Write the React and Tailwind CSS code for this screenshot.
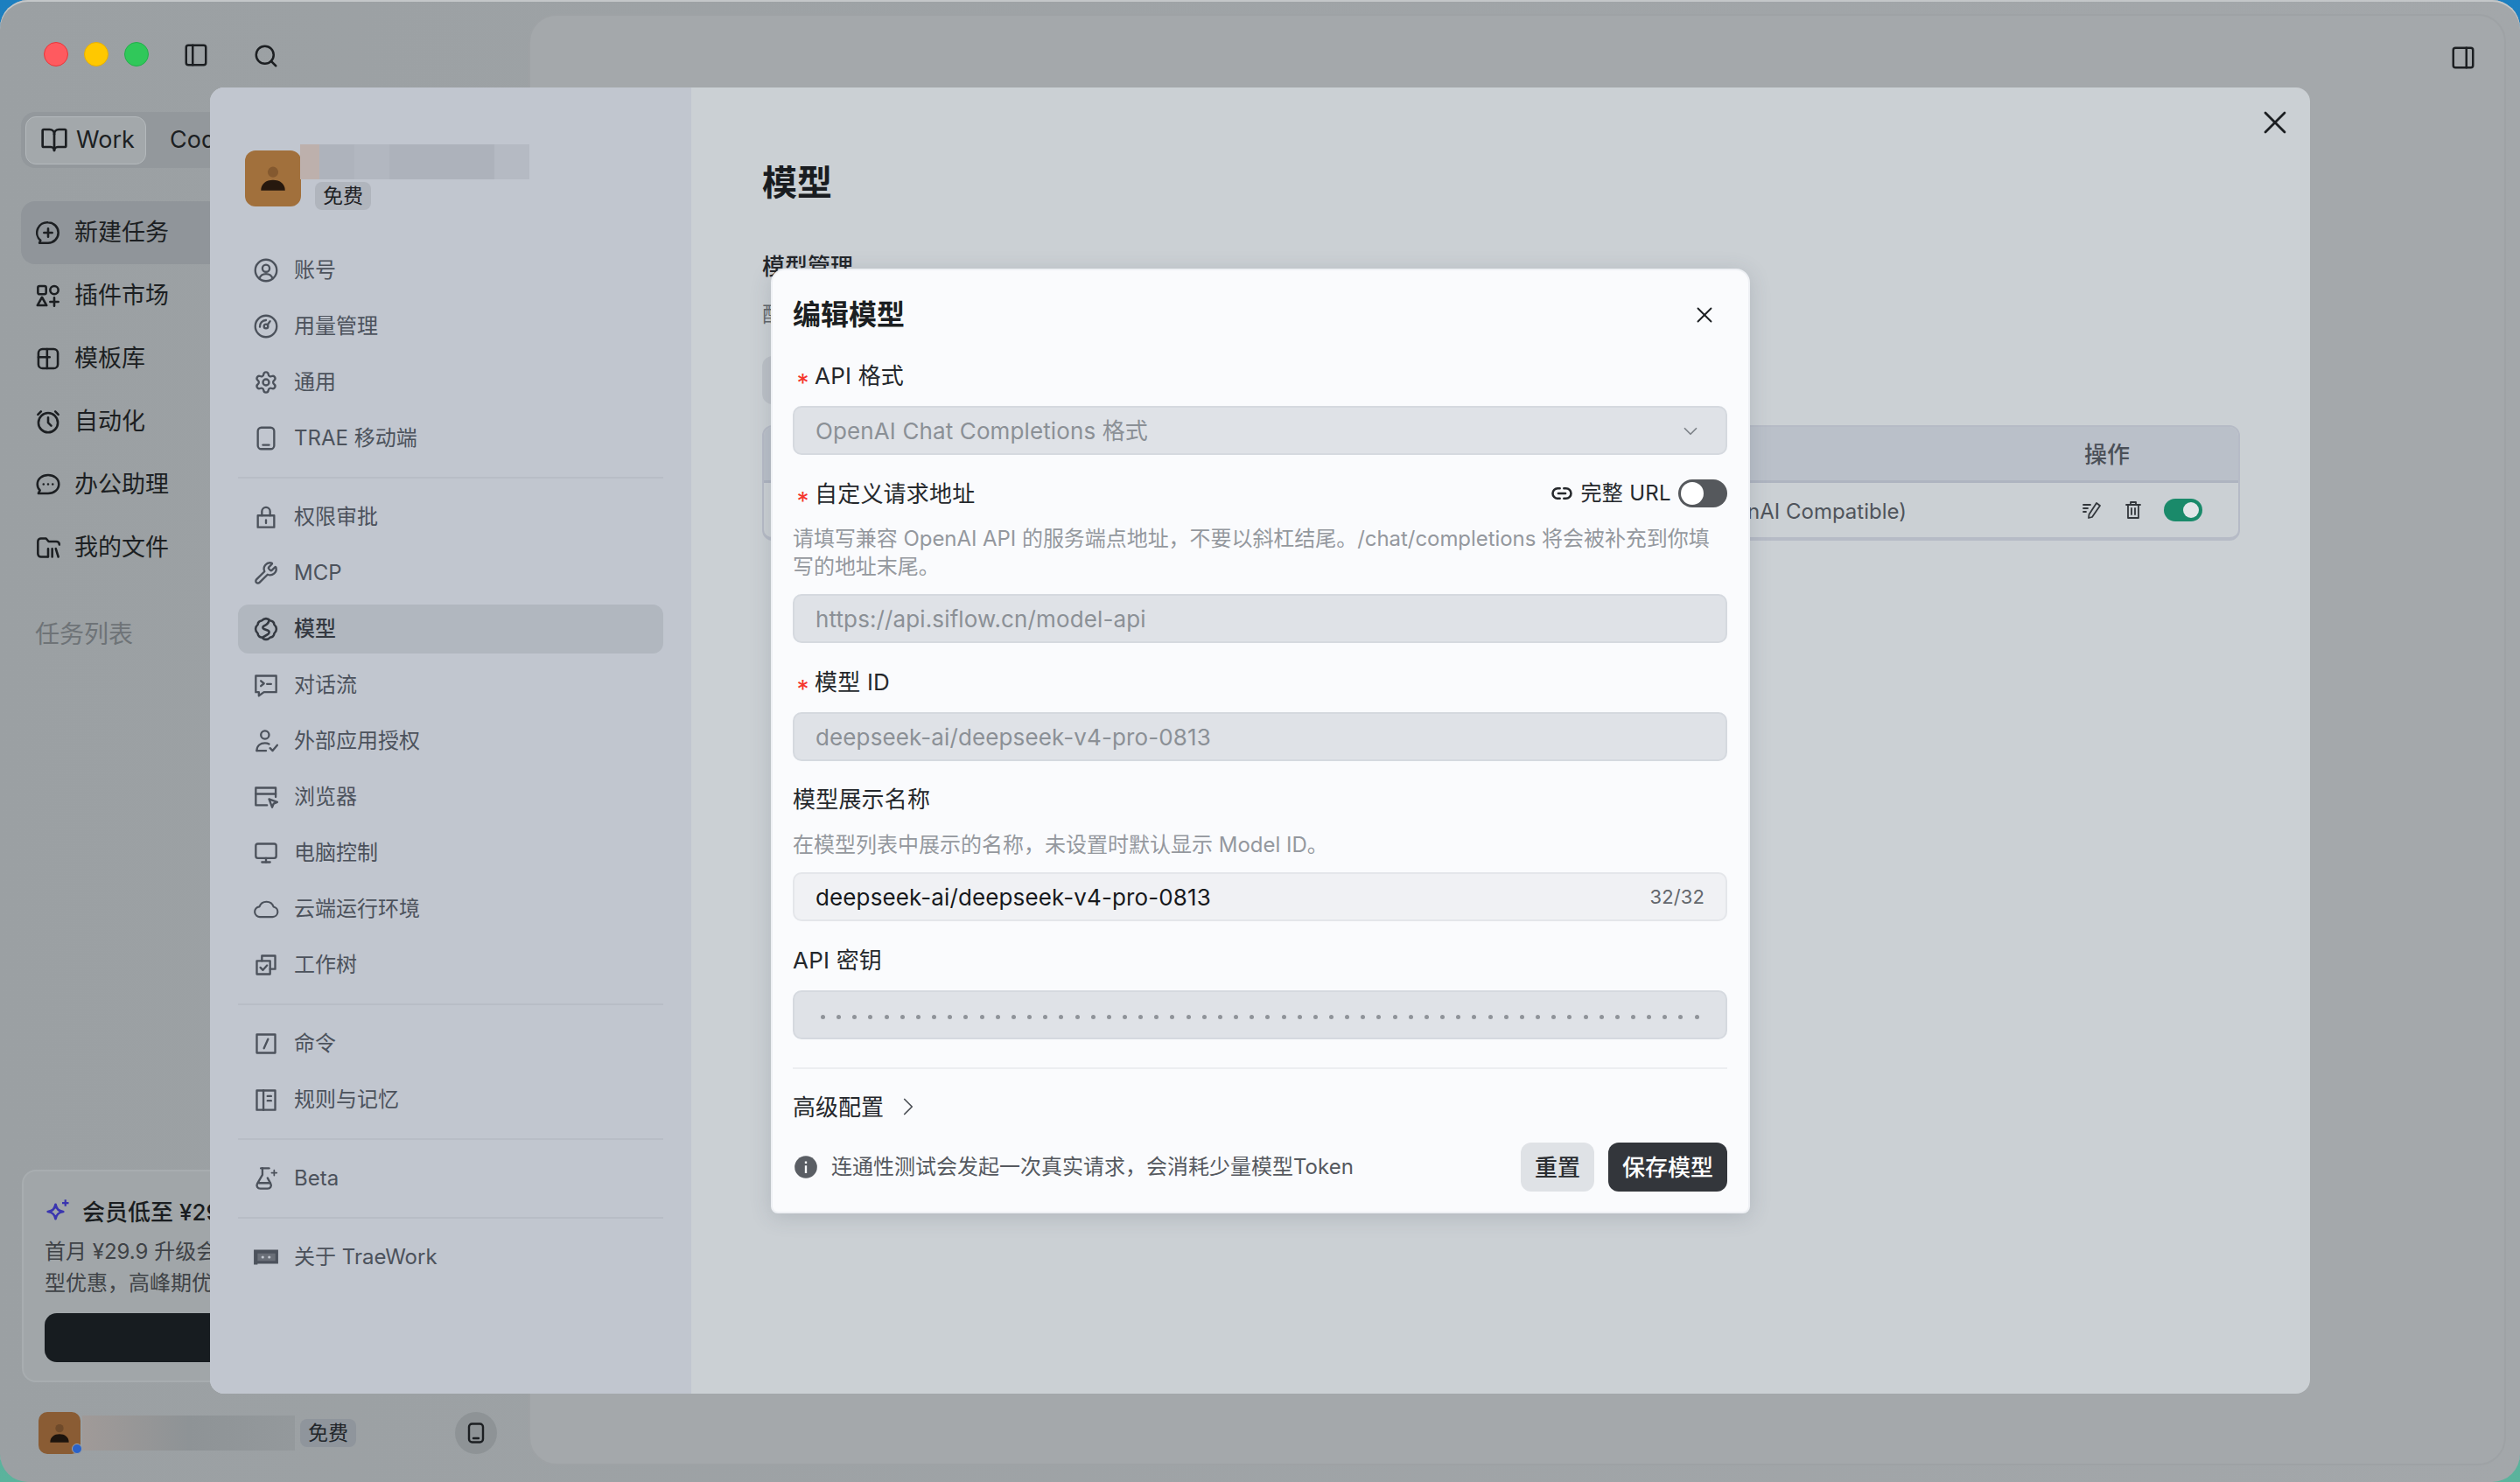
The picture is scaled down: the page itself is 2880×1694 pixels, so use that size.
import {
  BookOpen,
  ChevronDown,
  ChevronRight,
  Monitor,
  PanelLeft,
  Search,
  Settings,
  Wrench,
  X,
} from "lucide-react";

const Svg = ({ children, className = "w-7 h-7", sw = 2 }) => (
  <svg viewBox="0 0 24 24" fill="none" stroke="currentColor" strokeWidth={sw} strokeLinecap="round" strokeLinejoin="round" className={className}>
    {children}
  </svg>
);

const icons = {
  account: (
    <Svg>
      <circle cx="12" cy="12" r="10.5" />
      <circle cx="12" cy="10" r="3.5" />
      <path d="M5.5 20c1-3 3.5-4.5 6.5-4.5s5.5 1.5 6.5 4.5" />
    </Svg>
  ),
  usage: (
    <Svg>
      <circle cx="12" cy="12" r="10.5" />
      <circle cx="12" cy="12" r="2" />
      <path d="M13.5 10.5 16 7" />
      <path d="M6 12.5a6 6 0 0 1 6-6.5" />
    </Svg>
  ),
  general: <Settings className="w-7 h-7" strokeWidth={2} />,
  phone: (
    <Svg>
      <rect x="4" y="1.5" width="16" height="21" rx="3.5" />
      <path d="M9 18.5h6" />
    </Svg>
  ),
  lock: (
    <Svg>
      <path d="M4 10.5h16v11.5H4z" />
      <path d="M8 10.5V6.5a4 4 0 0 1 8 0v4" />
      <path d="M12 15v3" />
    </Svg>
  ),
  mcp: <Wrench className="w-7 h-7" strokeWidth={2} />,
  model: (
    <Svg sw={2.2}>
      <path d="M12 1.8c2 0 3.2 1 4.2 2 2 0 3.8 1.800 3.800 3.800 1.200 1 2.200 2.600 2.200 4.400s-1 3.400-2.200 4.400c0 2-1.800 3.800-3.800 3.800-1 1-2.200 2-4.200 2s-3.200-1-4.200-2c-2 0-3.800-1.800-3.800-3.800C2.800 15.400 1.800 13.800 1.800 12s1-3.400 2.200-4.400c0-2 1.800-3.800 3.800-3.800 1-1 2.200-2 4.200-2z" />
      <path d="M15 3.500c-.5 3-2.500 4.500-5 5.500-1.500.6-1.500 2.500 0 3l4 1.500c1.500.6 1.500 2.500 0 3.500l-5 3" />
    </Svg>
  ),
  flow: (
    <Svg>
      <path d="M2 3h20v16H10l-5 3.500V19H2z" />
      <path d="m7 8 3 2.500L7 13" />
      <path d="M13 11h4" />
    </Svg>
  ),
  auth: (
    <Svg>
      <circle cx="11" cy="6" r="4" />
      <path d="M3 21.500c0-5 3.500-7.500 8-7.500 1.500 0 3 .4 4 1" />
      <path d="M3 21.500h9" />
      <path d="m16 19 2.500 2.500L23 16" />
    </Svg>
  ),
  browser: (
    <Svg>
      <path d="M21.500 12V3H2v17h11" />
      <path d="M2 9h19.500" />
      <path d="m15 14 8 3-3.500 1.500L18 22z" />
    </Svg>
  ),
  monitor: <Monitor className="w-7 h-7" strokeWidth={2} />,
  cloud: (
    <svg viewBox="0 0 28 24" fill="none" stroke="currentColor" strokeWidth="2" strokeLinejoin="round" className="w-[30px] h-7">
      <path d="M8 20.500h13a5.500 5.500 0 0 0 1-10.900A8 8 0 0 0 7 9.500a5.500 5.500 0 0 0 1 11z" />
    </svg>
  ),
  tree: (
    <Svg>
      <path d="M8 8V3h13v13h-5" />
      <path d="M3 8h13v13H3z" />
      <path d="m6.500 14.500 2.500 2.500 4-4.500" />
    </Svg>
  ),
  command: (
    <Svg>
      <path d="M3 3h18v18H3z" />
      <path d="m14 7.500-4 9" />
    </Svg>
  ),
  rules: (
    <Svg>
      <path d="M3 3h18v19H3z" />
      <path d="M9.500 3v19" />
      <path d="M13.500 8.500H17M13.500 13H17" />
    </Svg>
  ),
  beta: (
    <Svg>
      <path d="M7 2h8" />
      <path d="M8.500 2v6.500L3.500 17c-1.300 2.400.2 5 3 5h7c2.800 0 4.300-2.600 3-5l-3-5.500" />
      <path d="M5 16.500h11" />
      <path d="M20 4v5M17.500 6.500h5" strokeWidth="1.500" />
    </Svg>
  ),
  about: (
    <svg viewBox="0 0 28 24" className="w-[30px] h-7">
      <path fill="currentColor" d="M1 4h26v15H5v1H1z" />
      <path fill="#6a6f78" d="M5 8h19v8H5z" />
      <circle cx="10.500" cy="12" r="1.500" fill="#c1c6cf" />
      <circle cx="17.500" cy="12" r="1.500" fill="#c1c6cf" />
    </svg>
  ),
};

const navGroups = [
  [
    ["account", "账号"],
    ["usage", "用量管理"],
    ["general", "通用"],
    ["phone", "TRAE 移动端"],
  ],
  [
    ["lock", "权限审批"],
    ["mcp", "MCP"],
    ["model", "模型", true],
    ["flow", "对话流"],
    ["auth", "外部应用授权"],
    ["browser", "浏览器"],
    ["monitor", "电脑控制"],
    ["cloud", "云端运行环境"],
    ["tree", "工作树"],
  ],
  [
    ["command", "命令"],
    ["rules", "规则与记忆"],
  ],
  [["beta", "Beta"]],
  [["about", "关于 TraeWork"]],
];

const sideItems = [
  [
    <Svg key="a" sw={2.2}>
      <path d="M12 2a10 10 0 0 1 0 20H3.500l1-2.500A10 10 0 0 1 12 2z" />
      <path d="M12 8v8M8 12h8" />
    </Svg>,
    "新建任务",
    true,
  ],
  [
    <Svg key="b" sw={2.2}>
      <rect x="2" y="2.500" width="8" height="8" rx="1.500" />
      <circle cx="18" cy="6.500" r="4" />
      <path d="m6 13.500 4.500 8h-9z" />
      <path d="M18 14v8M14 18h8" />
    </Svg>,
    "插件市场",
  ],
  [
    <Svg key="c" sw={2.2}>
      <rect x="2.500" y="2.500" width="19" height="19" rx="4" />
      <path d="M2.500 10.500h11M11 2.500v19" />
    </Svg>,
    "模板库",
  ],
  [
    <Svg key="d" sw={2.2}>
      <circle cx="12" cy="13" r="9.500" />
      <path d="M12 8v5l3 3M2 5l3-3M22 5l-3-3" />
    </Svg>,
    "自动化",
  ],
  [
    <Svg key="e" sw={2.2}>
      <path d="M12 2.500c5.800 0 10.500 3.800 10.500 9s-4.700 9-10.500 9H2.500l1.500-3C2.500 16 1.500 14 1.500 11.500c0-5.200 4.700-9 10.500-9z" />
      <path d="M7.500 11.500h.01M12 11.500h.01M16.500 11.500h.01" />
    </Svg>,
    "办公助理",
  ],
  [
    <Svg key="f" sw={2.2}>
      <path d="M11 21H5a3 3 0 0 1-3-3V6a3 3 0 0 1 3-3h5l2.500 3H20a3 3 0 0 1 3 3" />
      <path d="M12 13v8M16 13v8M19.500 13l2.500 8" />
    </Svg>,
    "我的文件",
  ],
];

const Blur = ({ className }) => <div className={className} />;

// faint tiled watermark, only kept on the empty part of the settings panel
function Watermark({ className }) {
  return (
    <div className={`absolute origin-top-left -rotate-[31deg] whitespace-nowrap text-[44px] font-light leading-[46px] text-black/[0.022] ${className}`}>
      akun-M-SL-AKUN-B3
      <br />
      2026-09-01 14:13:08
    </div>
  );
}

function NavItem({ icon, label, active }) {
  return (
    <div className={`flex h-14 items-center gap-[17px] rounded-xl pl-[17px] text-[24px] ${active ? "bg-[#b1b7bf] text-[#343941]" : "text-[#4c525c]"}`}>
      <span className="flex w-[30px] justify-center">{icons[icon]}</span>
      <span className={active ? "font-medium" : ""}>{label}</span>
    </div>
  );
}

function Label({ required, children }) {
  return (
    <div className="flex h-9 items-center text-[26px] tracking-[0.2px] text-[#25282c]">
      {required && (
        <span className="flex w-[25px] justify-center pr-[2px]">
          <span className="mt-[18px] text-[28px] leading-none text-[#f5352c]">*</span>
        </span>
      )}
      {children}
    </div>
  );
}

function Field({ className = "", children }) {
  return (
    <div className={`flex h-14 items-center rounded-[10px] border-2 border-[#d5d9df] px-[24px] pt-px text-[26px] tracking-[0.12px] ${className}`}>
      {children}
    </div>
  );
}

function Switch({ on }) {
  return on ? (
    <div className="flex h-[26px] w-[44px] items-center justify-end rounded-full bg-[#1a8a6a] pr-1">
      <div className="h-[18px] w-[18px] rounded-full bg-[#e2e6e8]" />
    </div>
  ) : (
    <div className="flex h-8 w-14 items-center rounded-full bg-[#55585c] pl-[3px]">
      <div className="h-[26px] w-[26px] rounded-full bg-white" />
    </div>
  );
}

export default function App() {
  return (
    <div className="relative h-[1694px] w-[2880px] overflow-hidden bg-gradient-to-b from-[#1c7fc0] to-[#5bb39c] font-['Inter','Noto_Sans_CJK_SC',sans-serif]">
      {/* app window behind the dimmed overlay */}
      <div className="flex h-full w-full rounded-[32px] bg-gradient-to-r from-[#9ba0a3] to-[#a3a7aa] shadow-[inset_0_2px_0_#c4c7c9]">
        <aside className="flex w-[604px] flex-col">
          <div className="flex h-[128px] pl-[50px] pt-[48px]">
            <div className="h-7 w-7 rounded-full border border-[#e8363a] bg-[#ff5a5f]" />
            <div className="ml-[18px] h-7 w-7 rounded-full border border-[#e8b000] bg-[#ffc800]" />
            <div className="ml-[18px] h-7 w-7 rounded-full border border-[#22b04a] bg-[#30c85a]" />
            <PanelLeft className="ml-[39px] h-[30px] w-[30px] text-[#1c1f22]" strokeWidth={2} />
            <Search className="ml-[50px] mt-px h-[30px] w-[30px] text-[#1c1f22]" strokeWidth={2} />
          </div>

          <div className="ml-6 flex h-16 w-[400px] items-center rounded-2xl bg-[#93989c] px-[5px] text-[27px] text-[#1c1f22]">
            <div className="flex h-[55px] w-[138px] items-center gap-[9px] rounded-xl border border-[#b4b9bc] bg-[#a3a8ab] pl-4">
              <BookOpen className="h-8 w-8" strokeWidth={2} />
              Work
            </div>
            <span className="ml-[27px]">Code</span>
          </div>

          <div className="ml-6 mt-[38px] flex w-[400px] flex-col text-[27px] text-[#1c1f22]">
            {sideItems.map(([icon, label, active], i) => (
              <div key={i} className={`flex h-[72px] items-center gap-4 rounded-2xl pl-[17px] ${active ? "bg-[#90959a]" : ""}`}>
                {icon}
                {label}
              </div>
            ))}
          </div>

          <div className="ml-[40px] mt-[42px] text-[28px] text-[#6e7377]">任务列表</div>

          <div className="ml-[25px] mt-auto w-[400px] rounded-2xl border-2 border-[#a8adb0] bg-[#a1a6a9] pl-6 pt-[28px]">
            <div className="flex h-9 items-center gap-[13px] text-[26px] font-medium text-[#1a1d20]">
              <svg viewBox="0 0 24 24" className="h-[30px] w-[30px] text-[#3a35b0]" fill="none" stroke="currentColor" strokeWidth="2.200" strokeLinejoin="round">
                <path d="M10 5.500c.8 4 2.500 5.800 7 6.500-4.500.7-6.200 2.500-7 6.500-.8-4-2.500-5.800-7-6.500 4.500-.7 6.200-2.500 7-6.500z" />
                <path d="M19 1v6M16 4h6" strokeWidth="1.800" />
              </svg>
              会员低至 ¥29.9
            </div>
            <div className="mt-[10px] whitespace-nowrap text-[24px] leading-9 text-[#3f4347]">
              首月 ¥29.9 升级会员
              <br />
              型优惠，高峰期优先
            </div>
            <div className="mb-[21px] mt-[16px] h-14 rounded-[14px] bg-[#171c20]" />
          </div>

          <div className="mb-8 ml-11 mt-[34px] flex h-12 items-center">
            <div className="relative flex h-12 w-12 items-center justify-center rounded-[10px] bg-[#8a5c34]">
              <svg viewBox="0 0 24 24" className="h-8 w-8 text-[#1d140d]" fill="currentColor">
                <circle cx="12" cy="8" r="3.500" fill="#6f4a2a" />
                <path d="M4 20c0-4.500 3.500-7 8-7s8 2.500 8 7z" />
              </svg>
              <div className="absolute bottom-0 -right-[2px] h-3 w-3 rounded-full border border-[#9da2a5] bg-[#2a62c9]" />
            </div>
            <div className="ml-[2px] h-10 w-[243px] bg-gradient-to-r from-[#a09a98] via-[#8e9396] to-[#94999c]" />
            <div className="ml-[6px] flex h-8 w-[64px] items-center justify-center rounded-lg bg-[#8f959c] text-[23px] text-[#22262a]">免费</div>
            <div className="ml-[113px] flex h-12 w-12 items-center justify-center rounded-full bg-[#8e9396] text-[#1c1f22]">
              <Svg className="h-6 w-6" sw={2.400}>
                <rect x="4" y="1.500" width="16" height="21" rx="3.500" />
                <path d="M9 18h6" />
              </Svg>
            </div>
          </div>
        </aside>

        <main className="mb-[19px] mr-[16px] mt-[16px] flex flex-1 justify-end rounded-[32px] border-2 border-[#9ea2a5] bg-[#a4a8ab] pr-[32px] pt-[33px]">
          <PanelLeft className="h-[30px] w-[30px] rotate-180 text-[#1c1f22]" strokeWidth={2} />
        </main>
      </div>

      {/* settings modal */}
      <div className="absolute left-[240px] top-[100px] flex h-[1493px] w-[2400px] overflow-hidden rounded-[16px] bg-[#cbd0d4]">
        <nav className="w-[550px] bg-[#c1c6cf] px-8 pt-[65px]">
          <div className="ml-2 flex">
            <div className="mt-[7px] flex h-16 w-16 items-center justify-center rounded-xl bg-[#a1703c]">
              <svg viewBox="0 0 24 24" className="h-11 w-11 text-[#26180e]" fill="currentColor">
                <circle cx="12" cy="8" r="3.300" fill="#84592f" />
                <path d="M4.500 19.500c0-4 3-6.500 7.500-6.500s7.500 2.500 7.500 6.500z" />
              </svg>
            </div>
            <div className="-ml-px w-[262px]">
              <div className="flex h-10">
                <Blur className="w-[22px] bg-[#bdb0ac]" />
                <Blur className="w-[40px] bg-[#aeb3bc]" />
                <Blur className="w-[40px] bg-[#b2b7c0]" />
                <Blur className="flex-1 bg-[#adb2bb]" />
                <Blur className="w-[40px] bg-[#b5bac3]" />
              </div>
              <div className="ml-[17px] mt-[3px] flex h-8 w-[64px] items-center justify-center rounded-lg bg-[#b0b5bd] text-[23px] text-[#1e2124]">免费</div>
            </div>
          </div>

          <div className="mt-[41px] flex flex-col">
            {navGroups.map((group, i) => (
              <div key={i} className={`flex flex-col gap-2 ${i > 0 ? "mt-4 border-t-2 border-[#b8bdc6] pt-4" : ""}`}>
                {group.map(([icon, label, active]) => (
                  <NavItem key={label} icon={icon} label={label} active={active} />
                ))}
              </div>
            ))}
          </div>
        </nav>

        <section className="relative flex-1 overflow-hidden pl-[81px] pr-[80px] pt-[84px]">
          <Watermark className="left-[1214px] top-[976px]" />
          <Watermark className="left-[1349px] top-[1240px]" />
          <X className="absolute right-[18px] top-[18px] h-11 w-11 text-[#1c1f22]" strokeWidth={1.500} />
          <h1 className="text-[40px] font-semibold leading-[50px] text-[#191c20]">模型</h1>
          <h2 className="mt-[53px] text-[26px] font-medium leading-9 text-[#23262a]">模型管理</h2>
          <p className="mt-[19px] text-[24px] leading-9 text-[#5f6469]">配</p>
          <div className="mt-[29px] h-[55px] w-[260px] rounded-xl bg-[#bcc1c7]" />
          <div className="mt-[24px] overflow-hidden rounded-xl border-2 border-b-4 border-[#b6bbc6]">
            <div className="grid h-[64px] grid-cols-[1fr_176px] items-center border-b-[3px] border-[#aeb4c0] bg-[#bac0c9] pt-[2px] text-[26px] font-medium text-[#4b5058]">
              <span />
              <span>操作</span>
            </div>
            <div className="grid h-[62px] grid-cols-[1fr_176px] items-center text-[24px] text-[#4f545b]">
              <span className="pr-[203px] pt-1 text-right">(OpenAI Compatible)</span>
              <span className="flex items-center">
                <svg viewBox="0 0 24 24" className="-ml-[3px] h-6 w-6 text-[#33373c]" fill="none" stroke="currentColor" strokeWidth="1.800" strokeLinejoin="round" strokeLinecap="round">
                  <path d="M2 6h8M2 10h5M2 14h3" />
                  <path d="M17 4l4 3-9 13-4 1 .5-4z" />
                </svg>
                <svg viewBox="0 0 24 24" className="ml-[23px] h-6 w-6 text-[#33373c]" fill="none" stroke="currentColor" strokeWidth="1.800" strokeLinejoin="round" strokeLinecap="round">
                  <path d="M4 6h16M9 6V3h6v3M6 6v15h12V6M10 10v7M14 10v7" />
                </svg>
                <span className="ml-[23px]"><Switch on /></span>
              </span>
            </div>
          </div>
        </section>
      </div>

      {/* edit model dialog */}
      <div className="absolute left-[881px] top-[307px] flex h-[1080px] w-[1119px] flex-col rounded-b-[8px] rounded-t-[16px] border-2 border-[#eef0f4] bg-[#fafbfd] pl-[23px] pr-[24px] pt-[33px] shadow-[0_4px_24px_rgba(60,70,90,0.18)]">
        <div className="flex h-9 items-center justify-between pr-[11px] text-[32px] font-semibold text-[#1c1f22]">
          编辑模型
          <X className="h-[30px] w-[30px] text-[#1c1f22]" strokeWidth={1.500} />
        </div>

        <div className="mt-[33px]"><Label required>API 格式</Label></div>
        <Field className="mt-[17px] justify-between bg-[#dfe2e7] text-[#8b9096]">
          OpenAI Chat Completions 格式
          <ChevronDown className="mr-[3px] h-[26px] w-[26px] text-[#7d8288]" strokeWidth={1.600} />
        </Field>

        <div className="mt-[26px] flex items-center justify-between">
          <Label required>自定义请求地址</Label>
          <div className="flex items-center text-[24px] tracking-[0.3px] text-[#25282c]">
            <svg viewBox="0 0 24 24" className="h-7 w-7" fill="none" stroke="currentColor" strokeWidth="2.200" strokeLinecap="round">
              <path d="M10 7H8a5 5 0 0 0 0 10h2M14 7h2a5 5 0 0 1 0 10h-2M8.500 12h7" />
            </svg>
            <span className="ml-2 mr-2">完整 URL</span>
            <Switch />
          </div>
        </div>
        <p className="mt-[18px] text-[24px] leading-8 tracking-[-0.05px] text-[#94989e]">
          请填写兼容 OpenAI API 的服务端点地址，不要以斜杠结尾。/chat/completions 将会被补充到你填写的地址末尾。
        </p>
        <Field className="mt-[15px] bg-[#dfe2e7] text-[#8b9096]">https://api.siflow.cn/model-api</Field>

        <div className="mt-[26px]"><Label required>模型 ID</Label></div>
        <Field className="mt-[17px] bg-[#dfe2e7] text-[#8b9096]">deepseek-ai/deepseek-v4-pro-0813</Field>

        <div className="mt-[25px]"><Label>模型展示名称</Label></div>
        <p className="mt-[19px] text-[24px] leading-8 text-[#94989e]">在模型列表中展示的名称，未设置时默认显示 Model ID。</p>
        <Field className="mt-[15px] justify-between border-[#e4e6ea] bg-[#f0f1f4] text-[#17191c]">
          deepseek-ai/deepseek-v4-pro-0813
          <span className="text-[22px] text-[#63676d]">32/32</span>
        </Field>

        <div className="mt-[26px]"><Label>API 密钥</Label></div>
        <Field className="mt-[17px] justify-between bg-[#dfe2e7] !px-[30px]">
          {Array.from({ length: 56 }).map((_, i) => (
            <span key={i} className="mt-1 h-[5px] w-[5px] rounded-full bg-[#8f9399]" />
          ))}
        </Field>

        <div className="mt-[32px] border-t-2 border-[#eceef1]" />
        <div className="mt-[25px] flex h-9 items-center text-[26px] text-[#25282c]">
          高级配置
          <ChevronRight className="ml-[11px] h-[34px] w-[34px] text-[#4c5056]" strokeWidth={1.200} />
        </div>

        <div className="mt-[23px] flex items-center">
          <svg viewBox="0 0 24 24" className="ml-px h-7 w-7 text-[#5a5e64]" fill="currentColor">
            <circle cx="12" cy="12" r="11" />
            <path d="M11 10.500h2V18h-2zM11 6.500h2v2h-2z" fill="#fafbfd" />
          </svg>
          <span className="ml-[15px] text-[24px] text-[#55595f]">连通性测试会发起一次真实请求，会消耗少量模型Token</span>
          <button className="ml-auto h-14 w-[84px] rounded-xl bg-[#dfe2e6] text-[26px] font-medium text-[#2a2d31]">重置</button>
          <button className="ml-4 h-14 w-[136px] rounded-xl bg-[#33363b] text-[26px] font-medium text-white">保存模型</button>
        </div>
      </div>
    </div>
  );
}
